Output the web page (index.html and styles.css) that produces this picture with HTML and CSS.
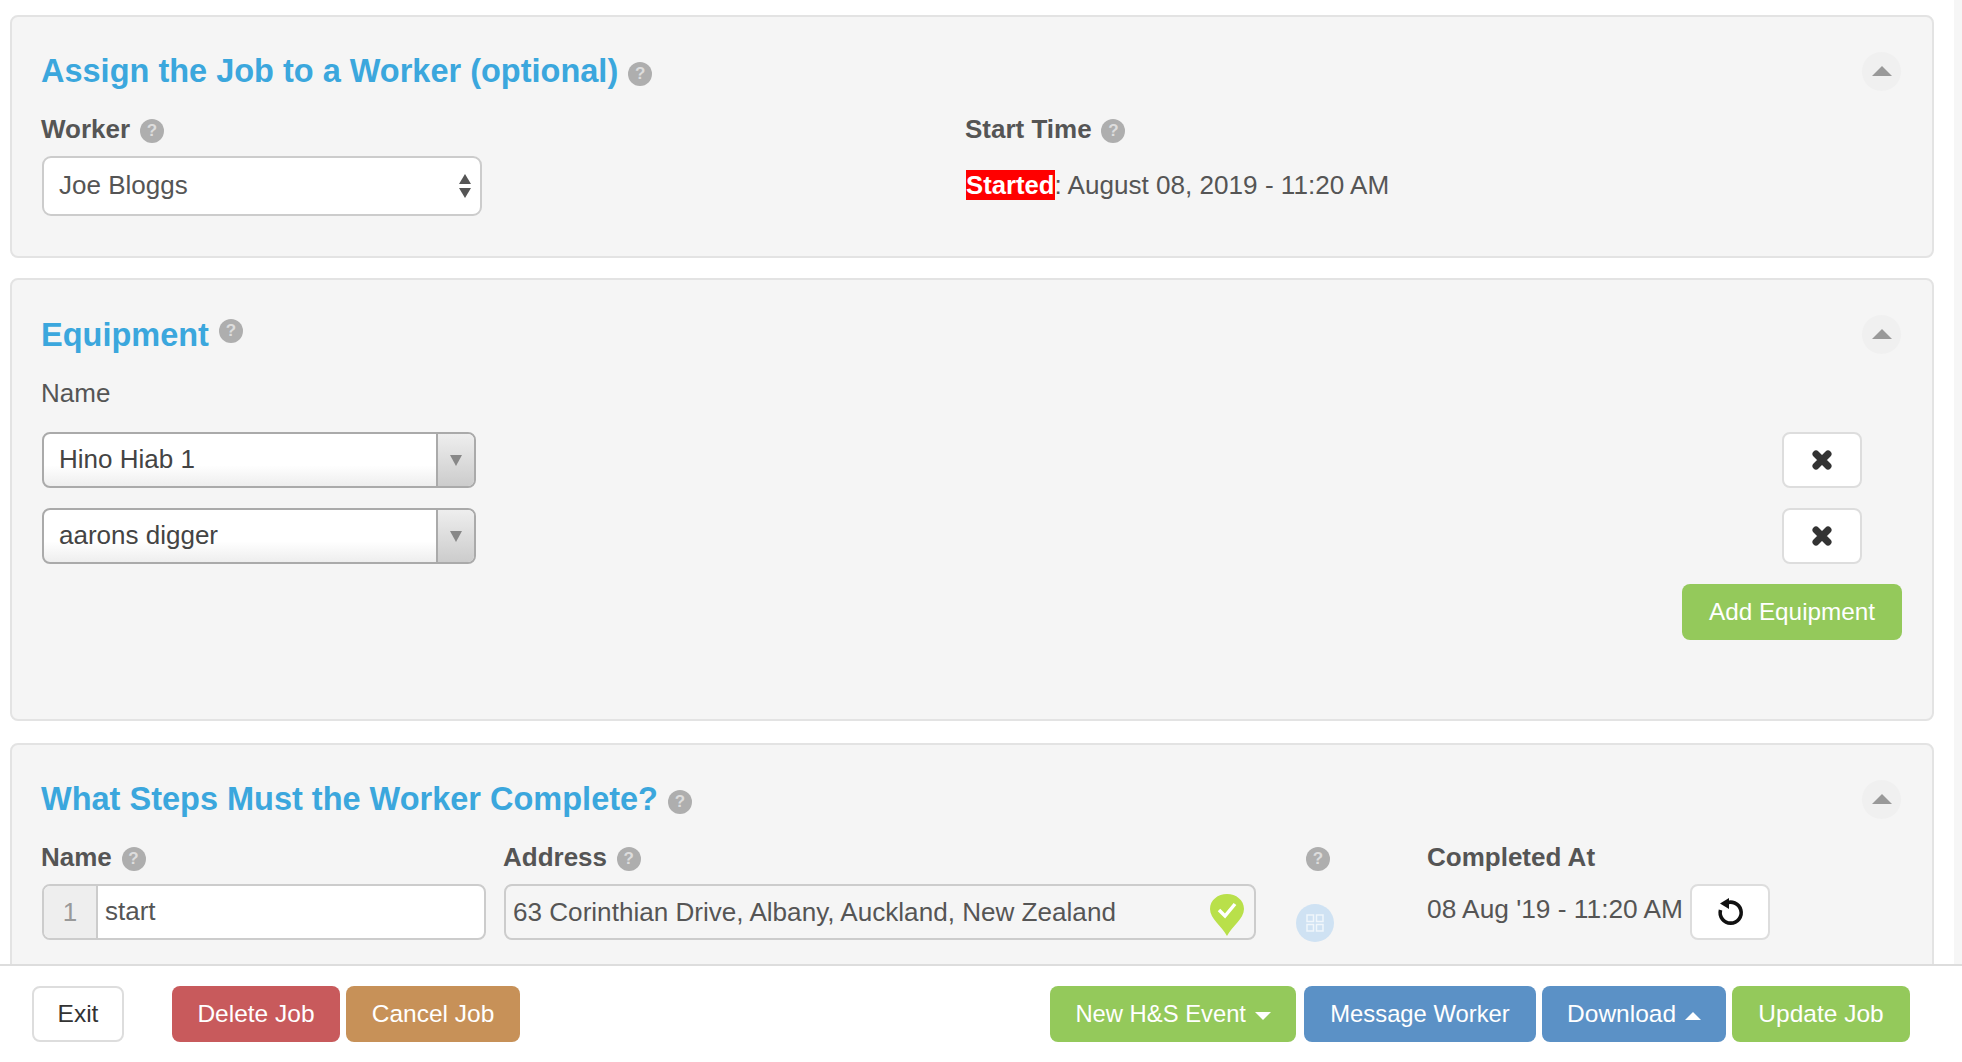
FILE: index.html
```html
<!DOCTYPE html>
<html lang="en">
<head>
    <meta charset="UTF-8">
    <meta name="viewport" content="width=device-width, initial-scale=1.0">
    <title>Job</title>
    <link rel="stylesheet" href="styles.css">
</head>
<body>
    <div class="page">
        <div class="main">
            <div class="content">

                <div class="panel panel-worker">
                    <div class="panel-head">
                        <h2>Assign the Job to a Worker (optional) <span class="help">?</span></h2>
                        <div class="collapse"></div>
                    </div>
                    <div class="worker-row">
                        <div>
                            <div class="label">Worker <span class="help">?</span></div>
                            <div class="select-box">
                                <span>Joe Bloggs</span>
                                <div class="spinner"><i class="up"></i><i class="down"></i></div>
                            </div>
                        </div>
                        <div>
                            <div class="label">Start Time <span class="help">?</span></div>
                            <div class="start-line"><span class="started">Started</span>: August 08, 2019 - 11:20 AM</div>
                        </div>
                    </div>
                </div>

                <div class="panel panel-equipment">
                    <div class="panel-head">
                        <h2>Equipment <span class="help help-raised">?</span></h2>
                        <div class="collapse"></div>
                    </div>
                    <div class="label-plain">Name</div>
                    <div class="equip-row">
                        <div class="combo">
                            <span class="combo-text">Hino Hiab 1</span>
                            <span class="combo-arrow"><i></i></span>
                        </div>
                        <button class="btn btn-icon">
                            <svg width="22" height="22" viewBox="0 0 22 22"><path d="M5 5L17 17M17 5L5 17" stroke="#333" stroke-width="7" stroke-linecap="round"/></svg>
                        </button>
                    </div>
                    <div class="equip-row">
                        <div class="combo">
                            <span class="combo-text">aarons digger</span>
                            <span class="combo-arrow"><i></i></span>
                        </div>
                        <button class="btn btn-icon">
                            <svg width="22" height="22" viewBox="0 0 22 22"><path d="M5 5L17 17M17 5L5 17" stroke="#333" stroke-width="7" stroke-linecap="round"/></svg>
                        </button>
                    </div>
                    <div class="add-row">
                        <button class="btn btn-green btn-add">Add Equipment</button>
                    </div>
                </div>

                <div class="panel panel-steps">
                    <div class="panel-head">
                        <h2>What Steps Must the Worker Complete? <span class="help">?</span></h2>
                        <div class="collapse"></div>
                    </div>
                    <div class="steps-grid">
                        <div class="label">Name <span class="help">?</span></div>
                        <div class="label">Address <span class="help">?</span></div>
                        <div class="label label-icon"><span class="help">?</span></div>
                        <div class="label">Completed At</div>

                        <div class="input-group">
                            <span class="addon">1</span>
                            <span class="input-text">start</span>
                        </div>
                        <div class="address-box">
                            <span>63 Corinthian Drive, Albany, Auckland, New Zealand</span>
                            <svg class="pin" width="36" height="44" viewBox="0 0 36 44">
                                <path d="M18 43C13 33 1 26 1 16C1 7 9 1 18 1C27 1 35 7 35 16C35 26 23 33 18 43Z" fill="#b9e04a"/>
                                <path d="M10 17L16 23L26 11" fill="none" stroke="#fff" stroke-width="3.5"/>
                            </svg>
                        </div>
                        <div class="grid-cell">
                            <div class="map-circle">
                                <svg width="18" height="18" viewBox="0 0 18 18" fill="none" stroke="#f0f6fb" stroke-width="1.5">
                                    <rect x="1" y="1" width="6.5" height="6.5"/>
                                    <rect x="10.5" y="1" width="6.5" height="6.5"/>
                                    <rect x="1" y="10.5" width="6.5" height="6.5"/>
                                    <rect x="10.5" y="10.5" width="6.5" height="6.5"/>
                                </svg>
                            </div>
                        </div>
                        <div class="completed">
                            <span class="completed-date">08 Aug '19 - 11:20 AM</span>
                            <button class="btn btn-icon btn-reset">
                                <svg width="30" height="30" viewBox="0 0 30 30">
                                    <path d="M10.5 6.5A10.5 10.5 0 1 1 5.5 13" fill="none" stroke="#111" stroke-width="3.6"/>
                                    <path d="M14 1L14 12L5 6.5Z" fill="#111"/>
                                </svg>
                            </button>
                        </div>
                    </div>
                </div>

            </div>
            <div class="track"></div>
        </div>

        <div class="footer">
            <button class="btn btn-exit">Exit</button>
            <button class="btn btn-red">Delete Job</button>
            <button class="btn btn-tan">Cancel Job</button>
            <div class="footer-right">
                <button class="btn btn-green btn-new">New H&amp;S Event <i class="caret caret-down"></i></button>
                <button class="btn btn-blue btn-msg">Message Worker</button>
                <button class="btn btn-blue btn-dl">Download <i class="caret caret-up"></i></button>
                <button class="btn btn-green btn-upd">Update Job</button>
            </div>
        </div>
    </div>
</body>
</html>
```

FILE: styles.css
```css
* {
    box-sizing: border-box;
}
body {
    margin: 0;
    font-family: "Liberation Sans", Arial, sans-serif;
    font-size: 25px;
    color: #555;
    background: #fff;
}
.page {
    height: 1062px;
    display: flex;
    flex-direction: column;
    overflow: hidden;
}
.main {
    flex: 1;
    display: flex;
    min-height: 0;
    overflow: hidden;
}
.content {
    flex: 1;
    padding: 15px 20px 0 10px;
}
.track {
    width: 8px;
    background: #f6f6f6;
}

/* panels */
.panel {
    background: #f5f5f5;
    border: 2px solid #e3e3e3;
    border-radius: 8px;
    padding: 34px 30px 0 30px;
}
.panel-worker { height: 243px; margin-bottom: 20px; }
.panel-equipment { height: 443px; margin-bottom: 22px; }
.panel-steps { height: 300px; }
.panel-head {
    display: flex;
    justify-content: space-between;
    align-items: center;
    height: 40px;
    margin-bottom: 23px;
}
.panel-equipment .panel-head { margin-bottom: 24px; }
.panel-equipment h2 { margin-top: 2px; }
h2 {
    margin: 0 0 0 -1px;
    font-size: 32.5px;
    font-weight: bold;
    color: #3ba7dd;
}
.collapse {
    width: 39px;
    height: 39px;
    margin-right: 1px;
    border-radius: 50%;
    background: #f0f0f0;
    display: flex;
    align-items: center;
    justify-content: center;
}
.collapse::before {
    content: "";
    border-left: 10px solid transparent;
    border-right: 10px solid transparent;
    border-bottom: 10px solid #999;
}
.help {
    display: inline-block;
    width: 24px;
    height: 24px;
    border-radius: 50%;
    background: #aeaeae;
    color: #ddd;
    font-size: 17px;
    font-weight: bold;
    line-height: 24px;
    text-align: center;
    vertical-align: 2px;
    margin-left: 2.5px;
}
h2 .help { vertical-align: 3px; margin-left: 1px; }
h2 .help-raised { vertical-align: 10px; }
.label {
    height: 30px;
    line-height: 30px;
    font-size: 26px;
    font-weight: bold;
    margin: 0 0 12px -1px;
}
.label-plain {
    height: 30px;
    line-height: 30px;
    margin: 0 0 24px -1px;
    font-size: 26px;
}

/* worker */
.worker-row {
    display: grid;
    grid-template-columns: 924px 1fr;
}
.select-box {
    width: 440px;
    height: 60px;
    background: #fff;
    border: 2px solid #ccc;
    border-radius: 9px;
    padding: 0 9px 2px 15px;
    font-size: 26px;
    display: flex;
    align-items: center;
    justify-content: space-between;
}
.spinner { margin-top: 2px; }
.spinner i {
    display: block;
    border-left: 6px solid transparent;
    border-right: 6px solid transparent;
}
.spinner .up { border-bottom: 10px solid #555; margin-bottom: 4px; }
.spinner .down { border-top: 10px solid #555; }
.start-line {
    height: 60px;
    padding-bottom: 2px;
    display: flex;
    align-items: center;
    font-size: 26.1px;
    white-space: pre;
}
.started {
    background: #f00;
    color: #fff;
    font-size: 25.7px;
    font-weight: bold;
    line-height: 30px;
}

/* equipment */
.equip-row {
    display: flex;
    justify-content: space-between;
    padding-right: 40px;
    margin-bottom: 20px;
}
.combo {
    width: 434px;
    height: 56px;
    border: 2px solid #aaa;
    border-radius: 8px;
    display: flex;
    overflow: hidden;
    background: linear-gradient(#fff 60%, #eee);
}
.combo-text {
    flex: 1;
    padding-left: 15px;
    line-height: 50px;
    font-size: 26px;
    color: #444;
}
.combo-arrow {
    width: 38px;
    border-left: 2px solid #aaa;
    background: linear-gradient(#eee, #ccc);
    display: flex;
    align-items: center;
    justify-content: center;
}
.combo-arrow i {
    border-left: 6px solid transparent;
    border-right: 6px solid transparent;
    border-top: 11px solid #888;
}
.add-row {
    display: flex;
    justify-content: flex-end;
}

/* buttons */
.btn {
    height: 56px;
    border: none;
    border-radius: 8px;
    font-family: inherit;
    font-size: 24.5px;
    color: #fff;
    padding: 0;
    cursor: pointer;
}
.btn-icon {
    width: 80px;
    background: #fff;
    border: 2px solid #ddd;
    display: flex;
    align-items: center;
    justify-content: center;
}
.btn-green { background: #94c95b; }
.btn-blue { background: #5b91c6; }
.btn-red { background: #c85a5c; }
.btn-tan { background: #c79158; }
.btn-add { width: 220px; font-size: 24.3px; }

/* steps */
.steps-grid {
    display: grid;
    grid-template-columns: 462px 792px 132px 1fr;
}
.input-group {
    width: 444px;
    height: 56px;
    display: flex;
    background: #fff;
    border: 2px solid #ccc;
    border-radius: 8px;
    overflow: hidden;
    font-size: 26px;
}
.addon {
    width: 54px;
    background: #eee;
    border-right: 2px solid #ccc;
    color: #999;
    text-align: center;
    line-height: 52px;
}
.input-text {
    padding-left: 7px;
    line-height: 50px;
}
.address-box {
    width: 752px;
    height: 56px;
    border: 2px solid #ccc;
    border-radius: 8px;
    padding: 0 9px 0 7px;
    font-size: 26.1px;
    display: flex;
    align-items: center;
    justify-content: space-between;
}
.pin {
    flex-shrink: 0;
    margin-top: 6px;
}
.label-icon { margin-left: 0; }
.label-icon .help { margin-left: 10px; }
.map-circle {
    width: 38px;
    height: 38px;
    margin-top: 20px;
    border-radius: 50%;
    background: #cfe2f3;
    display: flex;
    align-items: center;
    justify-content: center;
}
.completed {
    display: flex;
    align-items: flex-start;
    gap: 7px;
    margin-left: -1px;
}
.completed-date {
    font-size: 26.3px;
    line-height: 50px;
}

/* footer */
.footer {
    height: 98px;
    flex-shrink: 0;
    background: #fff;
    border-top: 2px solid #ddd;
    padding: 20px 52px 0 32px;
    display: flex;
    align-items: flex-start;
    gap: 6px;
}
.btn-exit {
    width: 92px;
    background: #fff;
    border: 2px solid #ddd;
    color: #333;
    margin-right: 42px;
}
.btn-red { width: 168px; }
.btn-tan { width: 174px; }
.footer-right {
    margin-left: auto;
    display: flex;
    gap: 6px;
}
.btn-new { width: 246px; margin-right: 2px; font-size: 23.8px; }
.btn-msg { width: 232px; font-size: 23.8px; }
.btn-dl { width: 184px; }
.btn-upd { width: 178px; }
.caret {
    display: inline-block;
    vertical-align: middle;
    margin-left: 2px;
    border-left: 8px solid transparent;
    border-right: 8px solid transparent;
}
.caret-down { border-top: 8px solid #fff; }
.caret-up { border-bottom: 8px solid #fff; }
```
